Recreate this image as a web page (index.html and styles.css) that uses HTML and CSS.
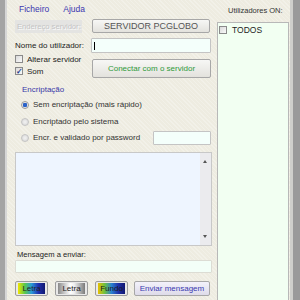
FILE: index.html
```html
<!DOCTYPE html>
<html>
<head>
<meta charset="utf-8">
<link rel="stylesheet" href="styles.css">
</head>
<body>
<div class="window">
  <div class="left">
    <div class="menu"><span>Ficheiro</span><span>Ajuda</span></div>
    <div class="row r1">
      <div class="addr">Endereço servidor:</div>
      <div class="btn server">SERVIDOR PCGLOBO</div>
    </div>
    <div class="row r2">
      <div class="lbl name">Nome do utilizador:</div>
      <div class="input nameinput"><span class="caret"></span></div>
    </div>
    <div class="row r3">
      <div class="checks">
        <div class="check"><span class="box"></span>Alterar servidor</div>
        <div class="check"><span class="box on">✓</span>Som</div>
      </div>
      <div class="btn connect">Conectar com o servidor</div>
    </div>
    <div class="group">Encriptação</div>
    <div class="radio r-first"><span class="dot on"></span>Sem encriptação (mais rápido)</div>
    <div class="radio"><span class="dot"></span>Encriptado pelo sistema</div>
    <div class="radio last"><span class="dot"></span><span class="rtext">Encr. e validado por password</span><span class="input pass"></span></div>
    <div class="chat">
      <div class="chat-body"></div>
      <div class="scroll"><span class="up"></span><span class="down"></span></div>
    </div>
    <div class="lbl msg">Mensagem a enviar:</div>
    <div class="input msginput"></div>
    <div class="buttons">
      <div class="cbtn"><span class="grad g1">Letra</span></div>
      <div class="cbtn"><span class="grad g2">Letra</span></div>
      <div class="cbtn"><span class="grad g3">Fundo</span></div>
      <div class="btn send">Enviar mensagem</div>
    </div>
  </div>
  <div class="right">
    <div class="users">Utilizadores ON:</div>
    <div class="list">
      <div class="check todos"><span class="box"></span>TODOS</div>
    </div>
  </div>
</div>
</body>
</html>
```
FILE: styles.css
```css
* { box-sizing: border-box; }
html, body { margin: 0; padding: 0; }
body {
  width: 300px; height: 300px; overflow: hidden;
  font-family: "Liberation Sans", Arial, sans-serif;
  font-size: 8px;
  color: #222;
}
.window {
  width: 300px; height: 300px;
  background-color: #eeece1;
  background-image: repeating-linear-gradient(45deg, rgba(255,255,255,0.25) 0 1px, transparent 1px 3px);
  border-left: 5px solid #a4a4a4;
  box-shadow: inset 2px 0 0 #d6d6d6;
  border-right: 7px solid #9a9a9a;
  display: flex;
  position: relative;
}
.window::after { content: ""; position: absolute; right: 0; top: 0; bottom: 0; width: 3px; background: #cfcfcb; }
.left { width: 197px; margin-left: 10px; display: flex; flex-direction: column; }
.menu { height: 19px; padding: 4px 0 0 4px; display: flex; gap: 14px; color: #3b36b0; font-size: 8.5px; }
.row { display: flex; }
.r1 { height: 15px; align-items: flex-start; }
.addr {
  width: 67px; height: 13px; background: #e4e4e2; color: #c4c4c4;
  text-shadow: 1px 1px 0 #fbfbfb; font-size: 7.6px; line-height: 13px; padding-left: 2px; margin-top: 1px;
}
.btn {
  border: 1px solid #a7a7a7; border-radius: 2px;
  background: linear-gradient(#f7f7f5, #e3e2dd);
  text-align: center; color: #555;
}
.server { margin-left: 10px; width: 118px; height: 14px; line-height: 12px; font-size: 9px; color: #555; }
.r2 { margin-top: 4px; height: 15px; align-items: center; }
.lbl { color: #222; }
.name { width: 76px; padding-left: 0px; font-size: 8px; }
.input { background: #f4fffb; border: 1px solid #c4c4c4; border-radius: 1px; }
.nameinput { width: 120px; height: 15px; position: relative; }
.caret { position: absolute; left: 2px; top: 3px; width: 1px; height: 8px; background: #000; }
.r3 { margin-top: 2px; }
.checks { width: 77px; display: flex; flex-direction: column; gap: 4px; padding-top: 0; }
.check { display: flex; align-items: center; height: 8px; gap: 4px; color: #222; font-size: 8px; }
.box {
  width: 8px; height: 8px; border: 1px solid #8a8a8a;
  background: linear-gradient(135deg, #d9d9d9, #fafafa);
  font-size: 8px; line-height: 7px; color: #1f3a8a; text-align: center; font-weight: bold;
}
.connect { width: 119px; height: 19px; margin-top: 4px; line-height: 17px; color: #2f9a3a; font-size: 8px; }
.group { margin-top: 7px; padding-left: 7px; color: #3a3aa8; height: 9px; line-height: 9px; font-size: 8px; }
.radio { display: flex; align-items: center; height: 9px; gap: 4px; padding-left: 6px; color: #333; margin-top: 8px; }
.r-first { margin-top: 6px; }
.dot {
  width: 8px; height: 8px; border-radius: 50%; border: 1px solid #c4c4c4;
  background: radial-gradient(#f2f2f2, #d6d6d6);
}
.dot.on { background: radial-gradient(circle, #2a62c8 0 2px, #e6e6e6 2.5px); border-color: #9a9a9a; }
.rtext { width: 115px; }
.pass { width: 58px; height: 14px; margin-left: 1px; }
.last { margin-top: 7px; }
.chat { margin-top: 10px; height: 94px; border: 1px solid #c8c8c8; display: flex; background: #eef5ff; }
.chat-body { flex: 1; }
.scroll { width: 11px; background: #ebebee; position: relative; }
.up, .down { position: absolute; left: 3px; width: 0; height: 0; border-left: 2px solid transparent; border-right: 2px solid transparent; }
.up { top: 7px; border-bottom: 3px solid #555; }
.down { bottom: 7px; border-top: 3px solid #555; }
.msg { margin-top: 4px; padding-left: 2px; height: 9px; line-height: 9px; font-size: 7.6px; }
.msginput { margin-top: 1px; height: 13px; width: 197px; background: #f3fff8; border-color: #dcdcd4; }
.buttons { display: flex; gap: 7px; margin-top: 8px; align-items: center; }
.cbtn { width: 33px; height: 15px; border: 1px solid #9c9c9c; border-radius: 2px; background: #e8e8e8; padding: 1px 2px; }
.grad { display: block; height: 11px; text-align: center; line-height: 11px; font-size: 8px; color: #222; }
.g1 { background: linear-gradient(90deg, #f2e600, #5ac84a, #2a9ad8, #2030b0, #101870); }
.g2 { background: linear-gradient(90deg, #8a8a8a, #ffffff 45%, #f0f0f0 60%, #7a7a7a); }
.g3 { background: linear-gradient(90deg, #e8c000, #6cc040, #2a80d0, #2030a8, #101870); color: #1a1a1a; }
.send { width: 76px; height: 15px; line-height: 13px; color: #3a3ab0; font-size: 8px; margin-left: -1px; background: linear-gradient(#f3f2fb, #dedbe9); }
.right { width: 72px; margin-left: 5px; display: flex; flex-direction: column; }
.users { height: 22px; padding: 6px 0 0 11px; color: #333; font-size: 7.5px; }
.list { flex: 1; background: #f2fff2; border: 1px solid #b8b8b8; border-bottom: none; padding: 3px 1px; }
.todos { gap: 5px; color: #222; font-size: 8.5px; }
```
